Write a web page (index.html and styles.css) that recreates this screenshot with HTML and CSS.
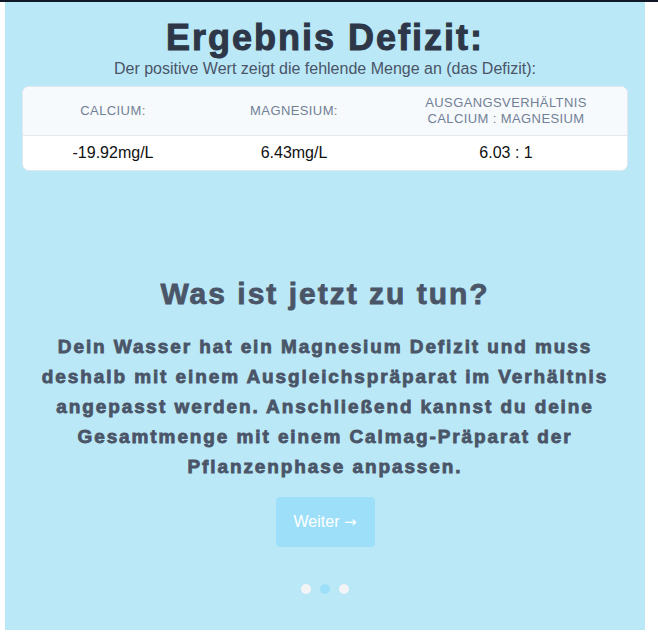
FILE: index.html
```html
<!DOCTYPE html>
<html lang="de">
<head>
    <meta charset="UTF-8">
    <meta name="viewport" content="width=device-width, initial-scale=1.0">
    <title>Ergebnis Defizit</title>
    <link rel="stylesheet" href="styles.css">
</head>
<body>

    <div class="topbar"></div>

    <div class="slide">
        <h1>Ergebnis Defizit:</h1>
        <p class="subtitle">Der positive Wert zeigt die fehlende Menge an (das Defizit):</p>

        <div class="result-card">
            <table class="result-table">
                <colgroup>
                    <col class="col-ca">
                    <col class="col-mg">
                    <col>
                </colgroup>
                <thead>
                    <tr>
                        <th>Calcium:</th>
                        <th>Magnesium:</th>
                        <th>Ausgangsverhältnis<br>Calcium : Magnesium</th>
                    </tr>
                </thead>
                <tbody>
                    <tr>
                        <td>-19.92mg/L</td>
                        <td>6.43mg/L</td>
                        <td>6.03 : 1</td>
                    </tr>
                </tbody>
            </table>
        </div>

        <h2>Was ist jetzt zu tun?</h2>
        <p class="advice">
            Dein Wasser hat ein Magnesium Defizit und muss<br>
            deshalb mit einem Ausgleichspräparat im Verhältnis<br>
            angepasst werden. Anschließend kannst du deine<br>
            Gesamtmenge mit einem Calmag-Präparat der<br>
            Pflanzenphase anpassen.
        </p>

        <button class="btn" type="button">Weiter <span class="arrow">&rarr;</span></button>

        <div class="dots">
            <span class="dot"></span>
            <span class="dot active"></span>
            <span class="dot"></span>
        </div>
    </div>

</body>
</html>
```

FILE: styles.css
```css
/* Base styles */
body {
    font-family: 'Liberation Sans', Arial, sans-serif;
    background: #fff;
    margin: 0;
    padding: 0;
}

.topbar {
    height: 2px;
    background: #111827;
}

.slide {
    width: 640px;
    height: 628px;
    margin-left: 5px;
    box-sizing: border-box;
    padding: 15px 17px 0;
    background: #bae8f7;
    display: flex;
    flex-direction: column;
    align-items: center;
}

/* Headings use a heavy, wide bold */
h1, h2, .advice {
    -webkit-text-stroke: 0.8px currentColor;
}

h1 {
    margin: 0;
    font-size: 36px;
    line-height: 41px;
    letter-spacing: 2px;
    color: #2d3748;
    -webkit-text-stroke-width: 1px;
}

.subtitle {
    margin: 2px 0 0;
    font-size: 16px;
    line-height: 18px;
    color: #4a5568;
}

/* Result table */
.result-card {
    align-self: stretch;
    margin-top: 8px;
    background: #fff;
    border: 1px solid #e2e8f0;
    border-radius: 7px;
    overflow: hidden;
}

.result-table {
    width: 100%;
    border-collapse: collapse;
    table-layout: fixed;
}

.col-ca {
    width: 180px;
}

.col-mg {
    width: 182px;
}

.result-table th {
    padding: 8px 10px;
    background: #f7fafc;
    border-bottom: 1px solid #e2e8f0;
    font-size: 13px;
    line-height: 16px;
    font-weight: normal;
    letter-spacing: 0.4px;
    text-transform: uppercase;
    color: #718096;
    height: 31px;
}

.result-table td {
    padding: 8px 10px;
    font-size: 16px;
    line-height: 18px;
    text-align: center;
    color: #111;
}

h2 {
    margin: 105px 0 0;
    font-size: 30px;
    line-height: 35px;
    letter-spacing: 2px;
    color: #4a5568;
}

.advice {
    margin: 21px 0 0;
    font-size: 19px;
    line-height: 30px;
    font-weight: bold;
    letter-spacing: 1.9px;
    text-align: center;
    color: #4a5568;
}

.btn {
    margin-top: 15px;
    width: 99px;
    height: 50px;
    padding: 0;
    border: none;
    border-radius: 4px;
    background: #9ddff9;
    color: #fff;
    font-family: inherit;
    font-size: 16px;
    cursor: pointer;
}

.arrow {
    font-family: 'DejaVu Sans', sans-serif;
    font-size: 15px;
}

.dots {
    display: flex;
    gap: 9px;
    margin-top: 37px;
}

.dot {
    width: 10px;
    height: 10px;
    border-radius: 50%;
    background: #f2f4f5;
}

.dot.active {
    background: #9ddff9;
}
```
